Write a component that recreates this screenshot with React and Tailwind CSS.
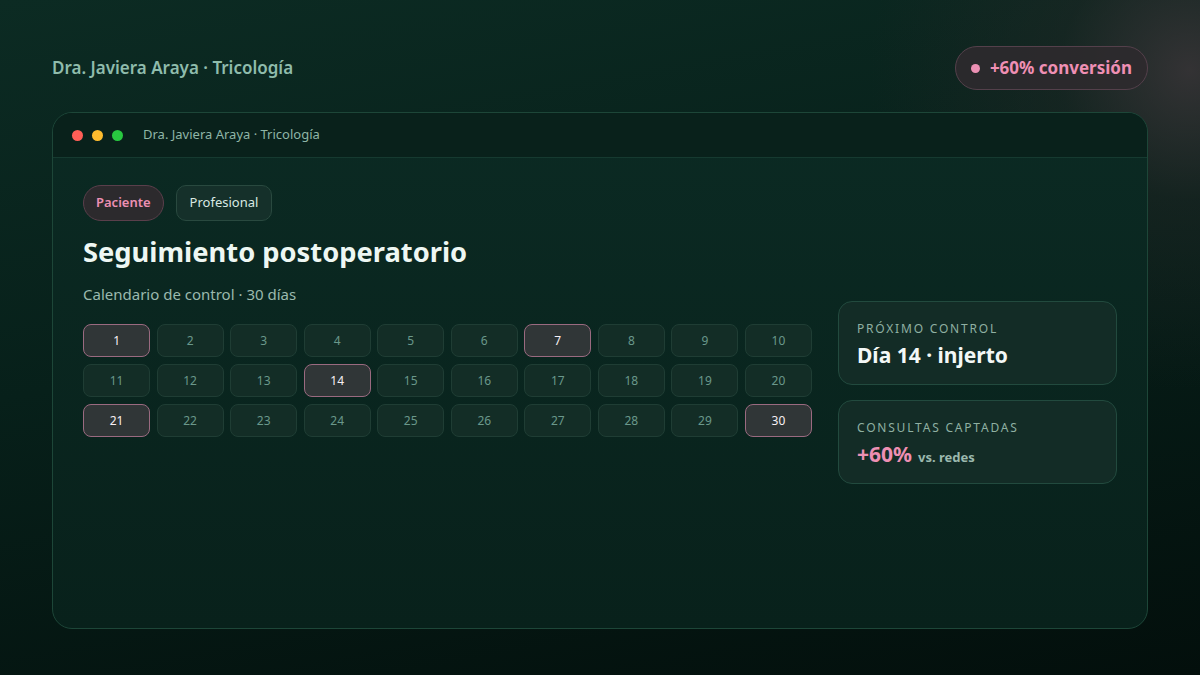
import React from "react";

const highlighted = new Set([1, 7, 14, 21, 30]);

export default function App() {
  const days = Array.from({ length: 30 }, (_, i) => i + 1);
  return (
    <div
      className="relative w-[1200px] h-[675px] overflow-hidden"
      style={{ fontFamily: '"Noto Sans", "Open Sans", sans-serif' }}
    >
      <div className="absolute inset-0 bg-[linear-gradient(170deg,#0c2b23_0%,#07201a_45%,#030f0c_100%)]" />
      <div className="absolute inset-0 bg-[radial-gradient(circle_at_1190px_70px,rgba(62,54,58,0.8)_0px,rgba(40,40,40,0.4)_130px,rgba(20,20,20,0)_320px)]" />
      <div className="relative flex flex-col px-[52px] pt-[46px]">
        <div className="flex items-center justify-between h-[44px]">
          <div className="text-[17px] font-semibold text-[#8fbcac]">Dra. Javiera Araya · Tricología</div>
          <div className="flex items-center gap-[10px] h-[44px] px-[15px] rounded-full bg-[#2e2a2e]/90 border border-[#54404b]">
            <span className="w-[9px] h-[9px] rounded-full bg-[#ec90b4]" />
            <span className="text-[17px] font-bold text-[#ef8fb4]">+60% conversión</span>
          </div>
        </div>
        <div className="mt-[22px] h-[517px] rounded-[20px] border border-[#1d4638] overflow-hidden flex flex-col bg-[linear-gradient(180deg,#0b2a23_0%,#08211b_100%)]">
          <div className="h-[45px] shrink-0 flex items-center px-[19px] bg-[#09211b] border-b border-[#163a30]">
            <div className="flex items-center gap-[9px]">
              <span className="w-[11px] h-[11px] rounded-full bg-[#ff5f57]" />
              <span className="w-[11px] h-[11px] rounded-full bg-[#febc2e]" />
              <span className="w-[11px] h-[11px] rounded-full bg-[#28c840]" />
            </div>
            <div className="ml-[20px] text-[13px] text-[#8fb5a7]">Dra. Javiera Araya · Tricología</div>
          </div>
          <div className="flex px-[30px] pt-[27px] gap-[26px]">
            <div className="flex-1 flex flex-col">
              <div className="flex gap-[12px]">
                <div className="h-[36px] px-[12px] flex items-center rounded-full bg-[#2c2a2d] border border-[#5a3f4b] text-[13px] font-semibold text-[#ec8fb3]">Paciente</div>
                <div className="h-[36px] px-[13px] flex items-center rounded-[10px] bg-[#15302a] border border-[#29493f] text-[13px] text-[#d9e9e2]">Profesional</div>
              </div>
              <h1 className="mt-[13px] text-[27.3px] leading-[36px] font-bold text-[#eef7f3]">Seguimiento postoperatorio</h1>
              <div className="mt-[13px] text-[15px] leading-[22px] text-[#9bb9ae]">Calendario de control · 30 días</div>
              <div className="mt-[19px] grid grid-cols-10 gap-x-[6.4px] gap-y-[7px]">
                {days.map((d) => {
                  const h = highlighted.has(d);
                  return (
                    <div
                      key={d}
                      className={
                        h
                          ? "h-[33px] flex items-center justify-center rounded-[8px] bg-[#303637] border border-[#9a6a80] text-[12px] text-[#f7f0f4]"
                          : "h-[33px] flex items-center justify-center rounded-[8px] bg-[#132d26] border border-[#1f3d34] text-[12px] text-[#6a988b]"
                      }
                    >
                      {d}
                    </div>
                  );
                })}
              </div>
            </div>
            <div className="w-[279px] shrink-0 pt-[116px] flex flex-col gap-[15px]">
              <div className="h-[84px] rounded-[14px] bg-[#132c26] border border-[#224a3e] px-[18px] pt-[19px]">
                <div className="text-[12px] leading-[16px] tracking-[0.15em] text-[#8fb0a2]">PRÓXIMO CONTROL</div>
                <div className="mt-[4px] text-[21px] leading-[28px] font-bold text-[#f3f8f6]">Día 14 · injerto</div>
              </div>
              <div className="h-[84px] rounded-[14px] bg-[#132c26] border border-[#224a3e] px-[18px] pt-[19px]">
                <div className="text-[12px] leading-[16px] tracking-[0.15em] text-[#8fb0a2]">CONSULTAS CAPTADAS</div>
                <div className="mt-[4px] flex items-baseline gap-[6px]">
                  <span className="text-[21px] leading-[28px] font-bold text-[#ee8fb3]">+60%</span>
                  <span className="text-[13px] font-bold text-[#9bb9ae]">vs. redes</span>
                </div>
              </div>
            </div>
          </div>
        </div>
      </div>
    </div>
  );
}
